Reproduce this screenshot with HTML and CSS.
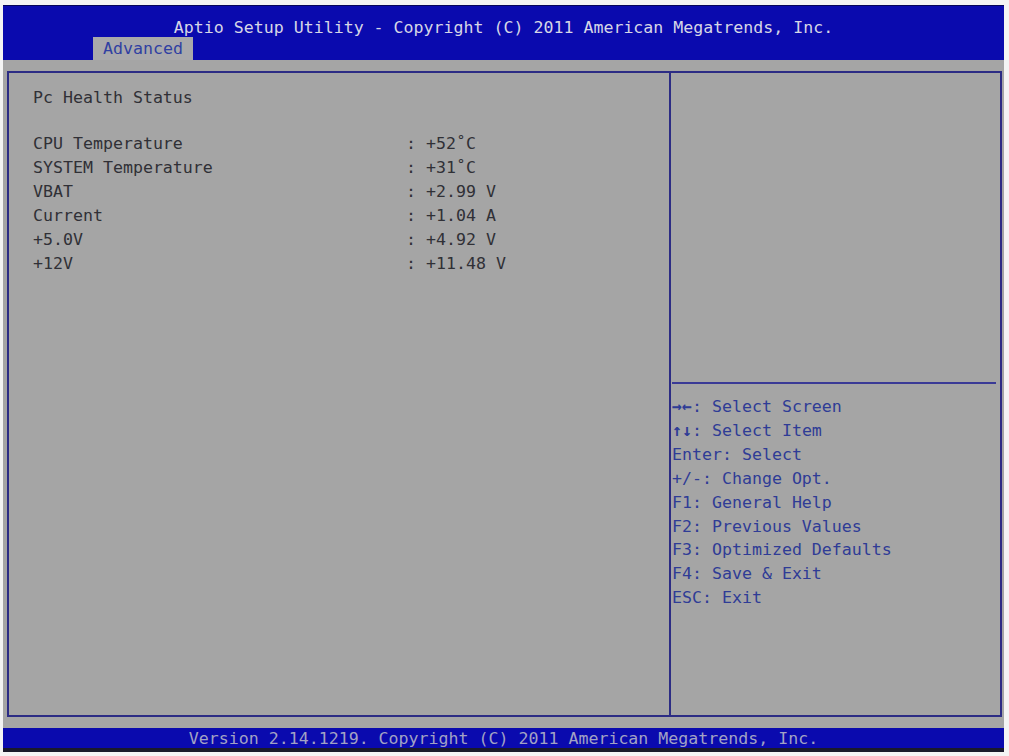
FILE: index.html
```html
<!DOCTYPE html>
<html lang="en">
  <head>
    <meta charset="UTF-8" />
    <meta name="viewport" content="width=device-width" />
    <title>Aptio Setup Utility</title>
    <link rel="stylesheet" href="styles.css">
  </head>

  <body>
    <div class="screen">
      <header class="header">
        <div class="title">Aptio Setup Utility - Copyright (C) 2011 American Megatrends, Inc.</div>
        <div class="tabs">
          <span class="tab">Advanced</span>
        </div>
      </header>
      <main class="main">
        <div class="panel">
          <section class="settings">
            <div class="heading">Pc Health Status</div>
            <div class="rows">
              <span>CPU Temperature</span><span>: +52˚C</span>
              <span>SYSTEM Temperature</span><span>: +31˚C</span>
              <span>VBAT</span><span>: +2.99 V</span>
              <span>Current</span><span>: +1.04 A</span>
              <span>+5.0V</span><span>: +4.92 V</span>
              <span>+12V</span><span>: +11.48 V</span>
            </div>
          </section>
          <aside class="side">
            <div class="side-top"></div>
            <hr class="side-rule" />
            <ul class="help">
              <li><b class="keys">→←</b>: Select Screen</li>
              <li><b class="keys">↑↓</b>: Select Item</li>
              <li>Enter: Select</li>
              <li>+/-: Change Opt.</li>
              <li>F1: General Help</li>
              <li>F2: Previous Values</li>
              <li>F3: Optimized Defaults</li>
              <li>F4: Save &amp; Exit</li>
              <li>ESC: Exit</li>
            </ul>
          </aside>
        </div>
      </main>
      <footer class="footer">Version 2.14.1219. Copyright (C) 2011 American Megatrends, Inc.</footer>
      <div class="edge"></div>
    </div>
  </body>
</html>
```

FILE: styles.css
```css
:root {
  --bios-blue: #0a0aae;
  --bios-gray: #a5a5a5;
  --frame: #2c2c84;
  --help-text: #2f3c96;
}
* {
  box-sizing: border-box;
}
body {
  margin: 0;
  background: #f4f4f4;
  font-family: "DejaVu Sans Mono", "Liberation Mono", monospace;
  font-size: 16.6px;
}
.screen {
  width: 1001px;
  height: 747px;
  margin: 5px 0 0 3px;
  display: flex;
  flex-direction: column;
  background: var(--bios-gray);
}
.header {
  height: 55px;
  background: var(--bios-blue);
  border-top: 1px solid #05055a;
  padding-top: 12px;
}
.title {
  height: 19px;
  line-height: 20px;
  text-align: center;
  color: #d6d6e6;
}
.tabs {
  padding-left: 90px;
}
.tab {
  display: inline-block;
  height: 23px;
  line-height: 24px;
  padding: 0 10px;
  background: #a9a9ab;
  color: #3040a2;
}
.main {
  height: 668px;
  padding: 11px 2px 11px 4px;
}
.panel {
  display: flex;
  height: 646px;
  border: 2px solid var(--frame);
}
.settings {
  width: 662px;
  border-right: 2px solid var(--frame);
  padding: 13px 0 0 24px;
  color: #303036;
  line-height: 24px;
}
.heading {
  margin-bottom: 22px;
}
.rows {
  display: grid;
  grid-template-columns: 373px auto;
}
.side {
  flex: 1;
  display: flex;
  flex-direction: column;
}
.side-top {
  height: 309px;
}
.side-rule {
  margin: 0 4px 0 1px;
  border: 0;
  height: 2px;
  background: #3a3a96;
}
.help {
  list-style: none;
  margin: 0;
  padding: 11px 0 0 1px;
  color: var(--help-text);
  line-height: 23.9px;
}
.keys {
  font-weight: bold;
}
.footer {
  height: 20px;
  line-height: 21px;
  text-align: center;
  background: var(--bios-blue);
  color: #a2a2c4;
}
.edge {
  height: 4px;
  background: #1a1a2a;
}
```
